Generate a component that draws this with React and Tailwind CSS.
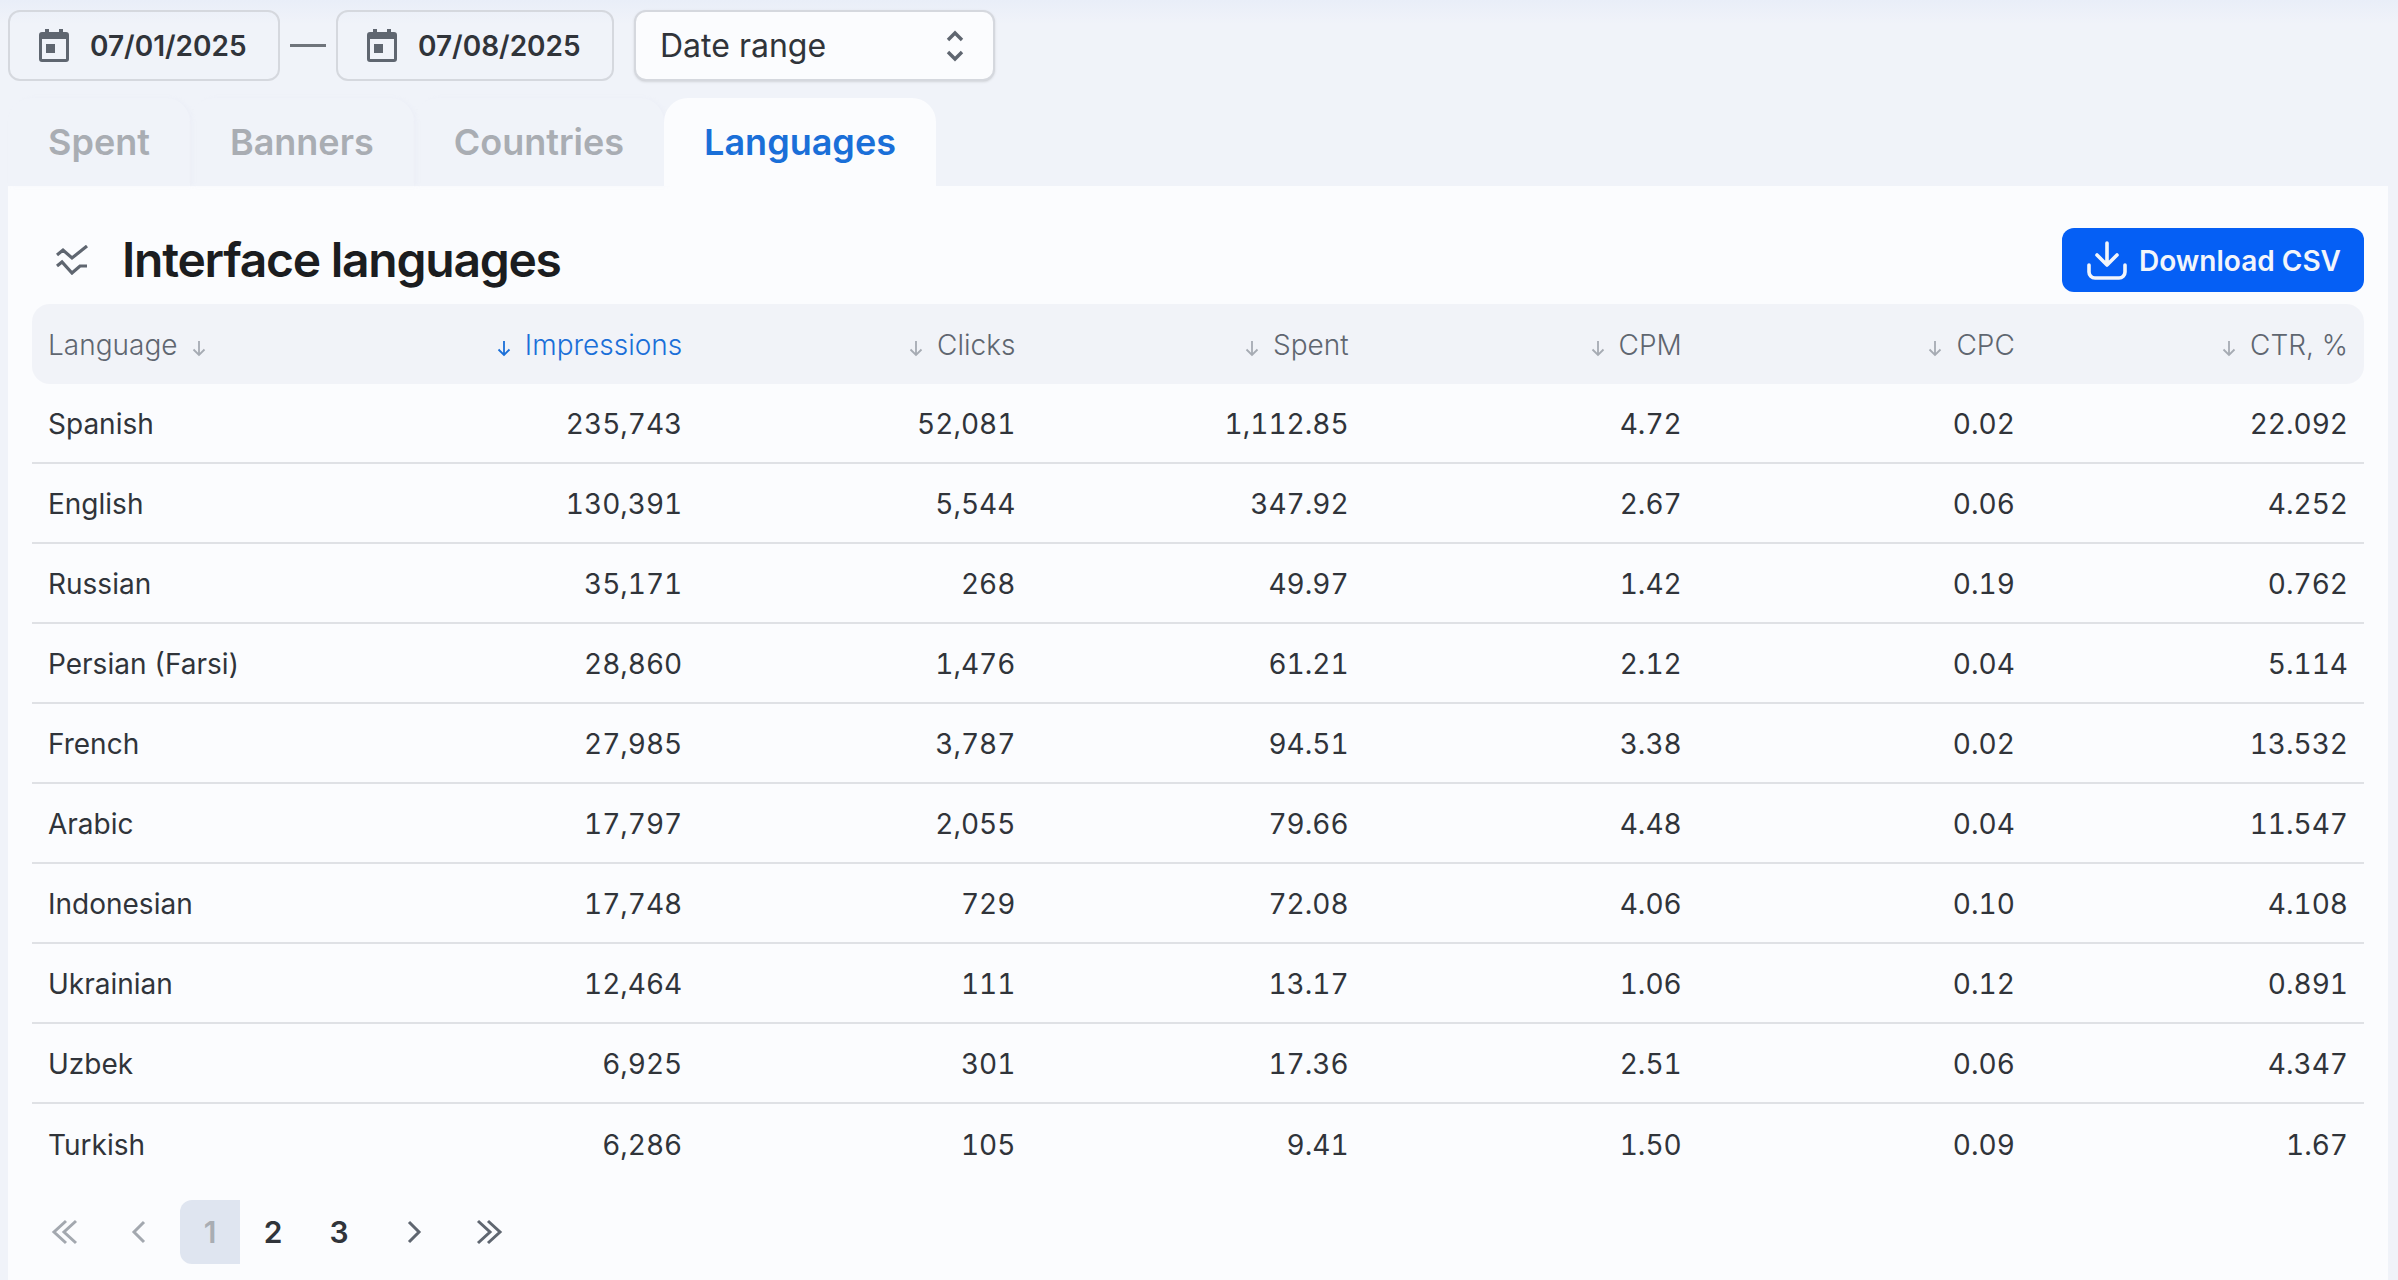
import React from "react";

const FONT = "font-['Inter',sans-serif]";

const ROWS = [
  ["Spanish", "235,743", "52,081", "1,112.85", "4.72", "0.02", "22.092"],
  ["English", "130,391", "5,544", "347.92", "2.67", "0.06", "4.252"],
  ["Russian", "35,171", "268", "49.97", "1.42", "0.19", "0.762"],
  ["Persian (Farsi)", "28,860", "1,476", "61.21", "2.12", "0.04", "5.114"],
  ["French", "27,985", "3,787", "94.51", "3.38", "0.02", "13.532"],
  ["Arabic", "17,797", "2,055", "79.66", "4.48", "0.04", "11.547"],
  ["Indonesian", "17,748", "729", "72.08", "4.06", "0.10", "4.108"],
  ["Ukrainian", "12,464", "111", "13.17", "1.06", "0.12", "0.891"],
  ["Uzbek", "6,925", "301", "17.36", "2.51", "0.06", "4.347"],
  ["Turkish", "6,286", "105", "9.41", "1.50", "0.09", "1.67"],
];

const HEAD = ["Impressions", "Clicks", "Spent", "CPM", "CPC", "CTR, %"];
const TABS = ["Spent", "Banners", "Countries"];

function CalendarIcon() {
  return (
    <svg width="30" height="33" viewBox="0 0 30 33" fill="#5f6670" className="shrink-0">
      <path fillRule="evenodd" d="M3 3h3V0h4v3h10V0h4v3h3a3 3 0 0 1 3 3v24a3 3 0 0 1-3 3H3a3 3 0 0 1-3-3V6a3 3 0 0 1 3-3Zm0 7v20h24V10H3Z" />
      <rect x="7" y="15" width="9" height="9" />
    </svg>
  );
}

function SortArrow({ active }) {
  return (
    <svg width="18" height="18" viewBox="0 0 18 18" fill="none" stroke={active ? "#1a6fd8" : "#a6abb3"} strokeWidth="1.8" className="mt-1.5 shrink-0">
      <path d="M9 2v14M3.5 10.5 9 16l5.5-5.5" />
    </svg>
  );
}

function DateBox({ value, width }) {
  return (
    <div className={`flex h-[71px] items-center gap-[21px] rounded-xl border-2 border-[#d5d8de] pl-[29px] ${width}`}>
      <CalendarIcon />
      <span className="text-[28px] font-semibold text-[#30343a]">{value}</span>
    </div>
  );
}

function PagerChevron({ d, color }) {
  return (
    <svg width="32" height="32" viewBox="0 0 32 32" fill="none" stroke={color} strokeWidth="3">
      <path d={d} />
    </svg>
  );
}

export default function App() {
  return (
    <div className={`${FONT} h-[1280px] w-full overflow-hidden bg-[#f0f3f9] bg-[linear-gradient(#e9eef8,#f0f3f9_24px)] pl-2 pr-2.5`}>
      <div className="flex items-center pt-2.5">
        <DateBox value="07/01/2025" width="w-[272px]" />
        <div className="mx-[10px] h-[3px] w-[36px] bg-[#6f747b]" />
        <DateBox value="07/08/2025" width="w-[278px]" />
        <div className="ml-[20px] flex h-[71px] w-[361px] items-center justify-between rounded-xl border-2 border-[#d5d8de] bg-[#fbfcfe] pl-6 pr-[26px] shadow-sm">
          <span className="text-[32px] text-[#30343a]">Date range</span>
          <svg width="24" height="36" viewBox="0 0 24 36" fill="none" stroke="#5f6670" strokeWidth="3.4">
            <path d="M5 12l7-7 7 7M5 24l7 7 7-7" />
          </svg>
        </div>
      </div>

      <div className="mt-[17px] flex h-[88px] items-stretch">
        {TABS.map((tab) => (
          <div key={tab} className="flex items-center rounded-t-3xl px-10 text-[36px] font-semibold text-[#a9adb3] shadow-[3px_0_4px_rgba(200,210,235,0.08)]">
            {tab}
          </div>
        ))}
        <div className="flex items-center rounded-t-3xl bg-[#fbfcfe] px-10 text-[36px] font-semibold text-[#1a6fd8]">
          Languages
        </div>
      </div>

      <div className="h-[1200px] rounded-bl-3xl bg-[#fbfcfe] px-6">
        <div className="flex items-center justify-between pb-3 pt-[42px]">
          <div className="flex items-center gap-[34px] pl-6">
            <svg width="32" height="30" viewBox="0 0 32 30" fill="none" stroke="#5f6670" strokeWidth="3.2">
              <path d="M1 10l6-5 9 8L31 1M1 21l5-4 10 11 8-7h7" />
            </svg>
            <h1 className="text-[48px] font-semibold leading-none tracking-[-1.25px] text-[#1b1d20]">Interface languages</h1>
          </div>
          <button className="flex h-[64px] w-[302px] items-center justify-center gap-[10px] rounded-xl bg-[#055ff5] pt-0.5 text-[28px] font-semibold text-[#f2f5fb]">
            <svg width="44" height="44" viewBox="0 0 44 44" fill="none" stroke="#f2f5fb" strokeWidth="3.6" strokeLinecap="round" strokeLinejoin="round">
              <path d="M22 4v22M12 16l10 10 10-10M4 26v7a6 6 0 0 0 6 6h24a6 6 0 0 0 6-6v-7" />
            </svg>
            Download CSV
          </button>
        </div>

        <div className="grid h-[80px] grid-cols-7 items-center rounded-[18px] bg-[#f1f3f8] pt-0.5 text-[28px] font-light text-[#5f6670]">
          <div className="flex items-center gap-3 px-4">
            Language <SortArrow />
          </div>
          {HEAD.map((h, i) => (
            <div key={h} className={`flex items-center justify-end gap-3 px-4 ${i === 0 ? "text-[#1a6fd8]" : ""}`}>
              <SortArrow active={i === 0} /> {h}
            </div>
          ))}
        </div>

        {ROWS.map((row, i) => (
          <div key={row[0]} className={`grid h-[80px] grid-cols-7 items-center pt-0.5 text-[28px] tabular-nums text-[#30343a] ${i < ROWS.length - 1 ? "border-b-2 border-[#dfe1e5]" : ""}`}>
            {row.map((cell, c) => (
              <div key={c} className={`px-4 ${c > 0 ? "text-right" : ""}`}>{cell}</div>
            ))}
          </div>
        ))}

        <div className="mt-4 flex h-[64px] items-center text-[30px] font-semibold text-[#30343a]">
          <div className="flex w-[66px] justify-center">
            <PagerChevron color="#a3a8af" d="M17 5 5 16l12 11M27 5 15 16l12 11" />
          </div>
          <div className="flex w-[82px] justify-center">
            <PagerChevron color="#a3a8af" d="M21 6 11 16l10 10" />
          </div>
          <div className="flex h-[64px] w-[60px] items-center justify-center rounded-l-xl bg-[#dfe5f0] text-[#a9adb3]">1</div>
          <div className="flex w-[66px] justify-center">2</div>
          <div className="flex w-[66px] justify-center">3</div>
          <div className="flex w-[84px] justify-center">
            <PagerChevron color="#5f6670" d="M11 6l10 10-10 10" />
          </div>
          <div className="flex w-[66px] justify-center">
            <PagerChevron color="#5f6670" d="M5 5l12 11L5 27M15 5l12 11-12 11" />
          </div>
        </div>
      </div>
    </div>
  );
}
